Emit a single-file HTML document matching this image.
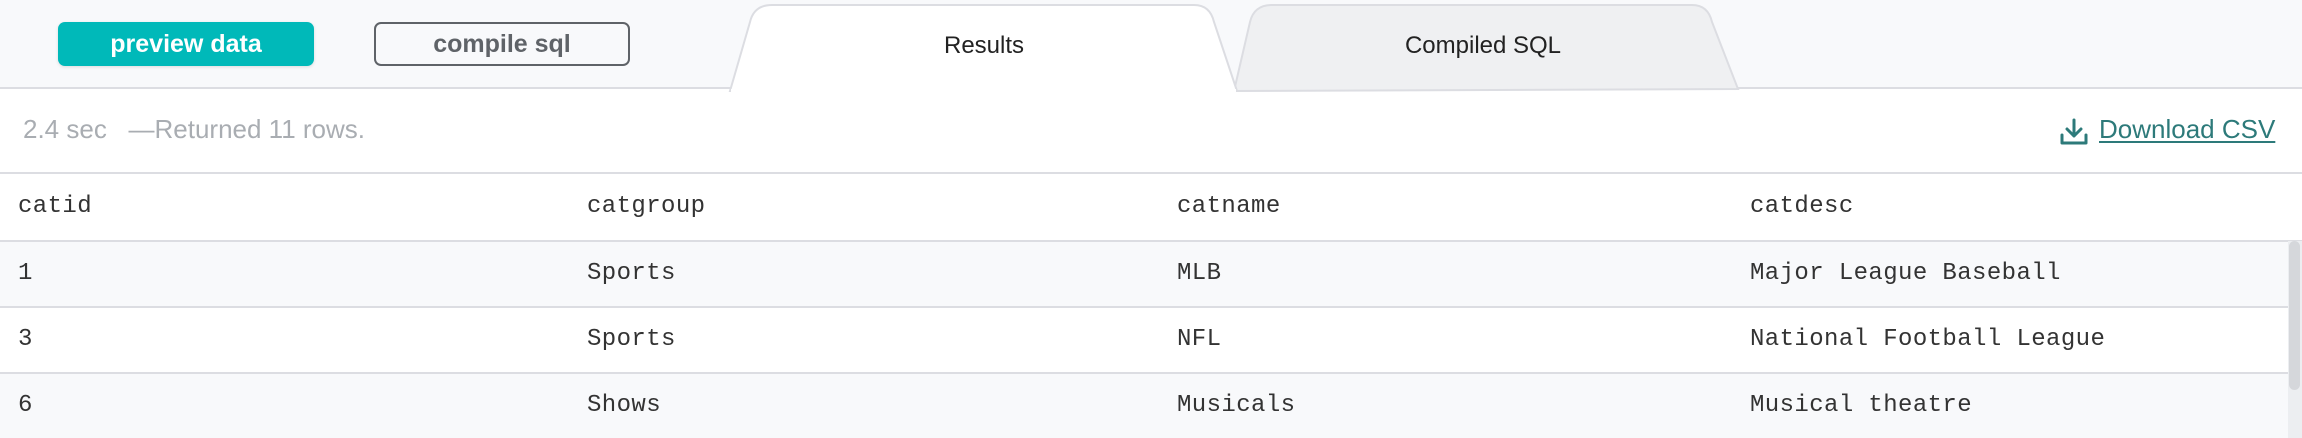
<!DOCTYPE html>
<html><head><meta charset="utf-8"><style>
*{margin:0;padding:0;box-sizing:border-box}
body{width:2302px;height:438px;overflow:hidden;background:#fff;font-family:"Liberation Sans",sans-serif;position:relative}
.top{position:absolute;left:0;top:0;width:2302px;height:89px;background:#f8f9fb;border-bottom:2px solid #dcdde2}
.btn{position:absolute;top:22px;height:44px;border-radius:7px;font-weight:bold;font-size:25px;display:flex;align-items:center;justify-content:center}
.p{left:58px;width:256px;background:#00b9b9;color:#fff;box-shadow:0 1px 3px rgba(0,0,0,.12)}
.c{left:374px;width:256px;border:2px solid #5f6368;color:#5f6368;background:transparent}
.abs{position:absolute}
.tabt{position:absolute;top:32px;font-size:24px;color:#222;transform:translateX(-50%)}
.info{position:absolute;left:23px;top:114px;font-size:26px;color:#a9adb2}
.dl{position:absolute;left:2099px;top:114px;font-size:26px;color:#2d7a7a;text-decoration:underline;text-underline-offset:3px}
.line{position:absolute;left:0;width:2288px;height:2px;background:#dcdde2}
.row{position:absolute;left:0;width:2288px;height:64px}
.cell{position:absolute;font-family:"Liberation Mono",monospace;font-size:24px;letter-spacing:0.4px;color:#333}
</style></head><body>
<div class="top"></div>
<div class="btn p">preview data</div>
<div class="btn c">compile sql</div>
<svg class="abs" style="left:0;top:0" width="2302" height="92">
<path d="M1234 91 L1250 22 Q1254 5 1272 5 L1692 5 Q1708 5 1712 22 L1738 89 Z" fill="#eff0f2" stroke="#dcdde2" stroke-width="2"/>
<path d="M730 91 L750 22 Q754 5 772 5 L1194 5 Q1210 5 1214 22 L1237 91 Z" fill="#fff" stroke="#dcdde2" stroke-width="2"/>
<rect x="731" y="89" width="505" height="3" fill="#fff"/>
</svg>
<div class="tabt" style="left:984px">Results</div>
<div class="tabt" style="left:1483px">Compiled SQL</div>
<div class="info">2.4 sec &nbsp;&nbsp;—Returned 11 rows.</div>
<svg class="abs" style="left:2059px;top:118px" width="30" height="28" viewBox="0 0 30 28"><path d="M15 2 V18 M8 11 L15 18 L22 11 M3 17 V25 H27 V17" fill="none" stroke="#2d7a7a" stroke-width="3" stroke-linecap="round" stroke-linejoin="round"/></svg>
<div class="dl">Download CSV</div>
<div class="line" style="top:172px;width:2302px"></div>
<div class="cell" style="left:18px;top:193px">catid</div>
<div class="cell" style="left:587px;top:193px">catgroup</div>
<div class="cell" style="left:1177px;top:193px">catname</div>
<div class="cell" style="left:1750px;top:193px">catdesc</div>
<div class="line" style="top:240px;width:2302px"></div>
<div class="row" style="top:242px;background:#f8f9fb"></div>
<div class="cell" style="left:18px;top:260px">1</div>
<div class="cell" style="left:587px;top:260px">Sports</div>
<div class="cell" style="left:1177px;top:260px">MLB</div>
<div class="cell" style="left:1750px;top:260px">Major League Baseball</div>
<div class="line" style="top:306px"></div>
<div class="cell" style="left:18px;top:326px">3</div>
<div class="cell" style="left:587px;top:326px">Sports</div>
<div class="cell" style="left:1177px;top:326px">NFL</div>
<div class="cell" style="left:1750px;top:326px">National Football League</div>
<div class="line" style="top:372px"></div>
<div class="row" style="top:374px;background:#f8f9fb"></div>
<div class="cell" style="left:18px;top:392px">6</div>
<div class="cell" style="left:587px;top:392px">Shows</div>
<div class="cell" style="left:1177px;top:392px">Musicals</div>
<div class="cell" style="left:1750px;top:392px">Musical theatre</div>
<div class="abs" style="left:2288px;top:241px;width:14px;height:197px;background:#eceef1"></div>
<div class="abs" style="left:2289px;top:241px;width:11px;height:149px;background:#d5d7db;border-radius:6px"></div>
</body></html>
